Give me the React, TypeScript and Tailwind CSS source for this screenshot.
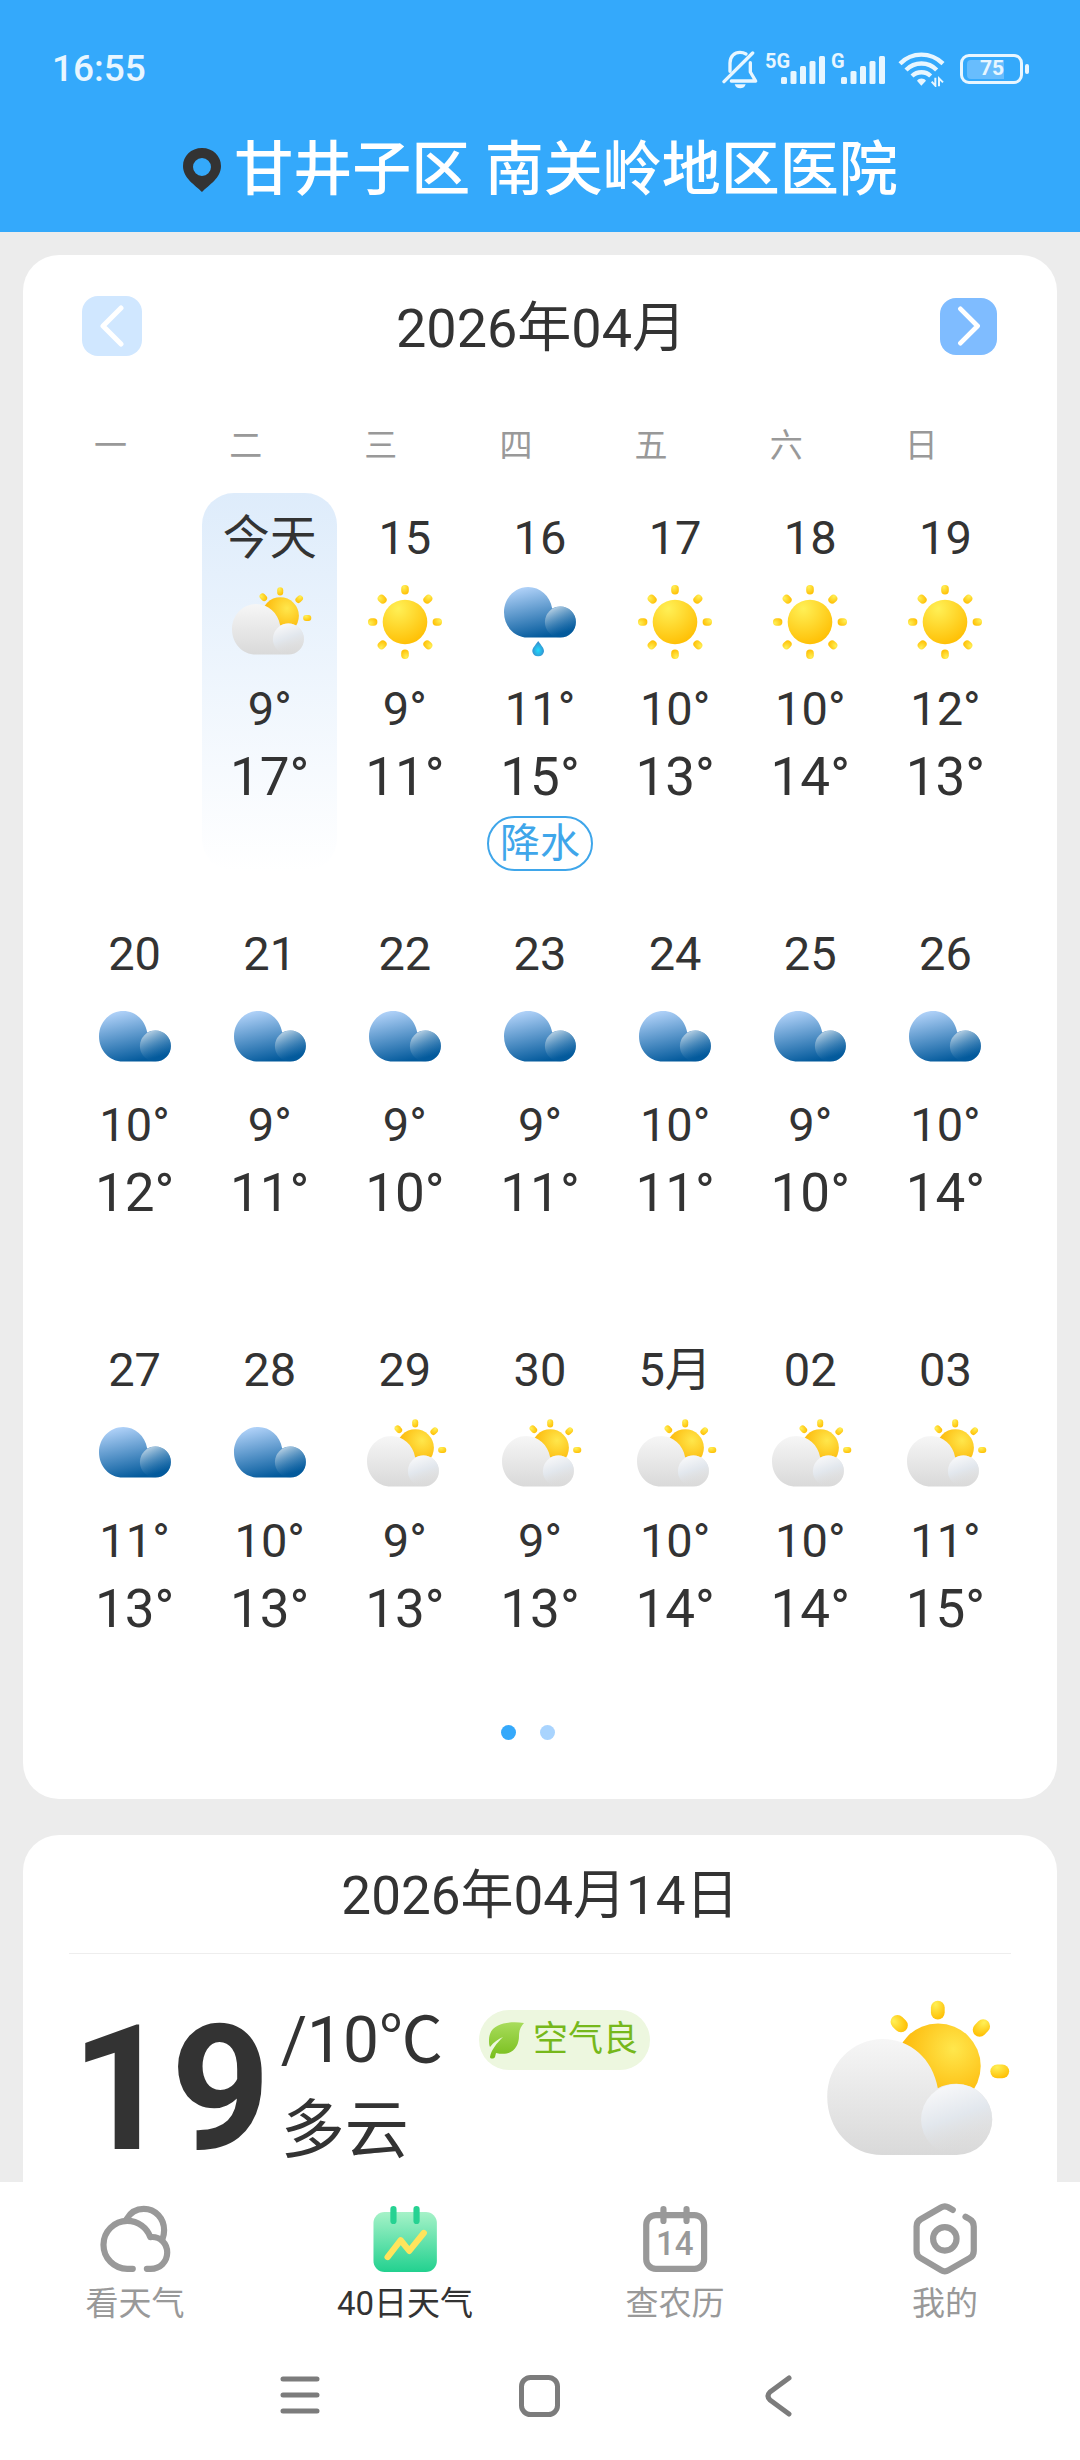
import { useState, type ReactNode } from 'react';

type Weather = 'sunny' | 'partly' | 'cloudy' | 'rain';

interface Day {
  label: string;
  weather: Weather;
  low: number;
  high: number;
  tag?: string;
  today?: boolean;
}

const WEEKDAYS = ['一', '二', '三', '四', '五', '六', '日'];

const WEEKS: (Day | null)[][] = [
  [
    null,
    { label: '今天', weather: 'partly', low: 9, high: 17, today: true },
    { label: '15', weather: 'sunny', low: 9, high: 11 },
    { label: '16', weather: 'rain', low: 11, high: 15, tag: '降水' },
    { label: '17', weather: 'sunny', low: 10, high: 13 },
    { label: '18', weather: 'sunny', low: 10, high: 14 },
    { label: '19', weather: 'sunny', low: 12, high: 13 },
  ],
  [
    { label: '20', weather: 'cloudy', low: 10, high: 12 },
    { label: '21', weather: 'cloudy', low: 9, high: 11 },
    { label: '22', weather: 'cloudy', low: 9, high: 10 },
    { label: '23', weather: 'cloudy', low: 9, high: 11 },
    { label: '24', weather: 'cloudy', low: 10, high: 11 },
    { label: '25', weather: 'cloudy', low: 9, high: 10 },
    { label: '26', weather: 'cloudy', low: 10, high: 14 },
  ],
  [
    { label: '27', weather: 'cloudy', low: 11, high: 13 },
    { label: '28', weather: 'cloudy', low: 10, high: 13 },
    { label: '29', weather: 'partly', low: 9, high: 13 },
    { label: '30', weather: 'partly', low: 9, high: 13 },
    { label: '5月', weather: 'partly', low: 10, high: 14 },
    { label: '02', weather: 'partly', low: 10, high: 14 },
    { label: '03', weather: 'partly', low: 11, high: 15 },
  ],
];

const CLOUD_PATH =
  'M24 50.6C10 50.6 0 39 0 25.3C0 11 11 0 24.2 0C36 0 46 8.5 48.2 21.5C50.5 20.2 53 19.5 56.4 19.5A15.55 15.55 0 0 1 56.4 50.6Z';

// Shared gradients, referenced by every weather icon
function IconDefs() {
  return (
    <svg className="absolute size-0" aria-hidden="true">
      <defs>
        <radialGradient id="sun" cx="0.35" cy="0.2" r="0.8">
          <stop offset="0" stopColor="#fff056" />
          <stop offset="1" stopColor="#ffc107" />
        </radialGradient>
        <radialGradient id="sunBehind" cx="0.68" cy="0.3" r="0.6">
          <stop offset="0" stopColor="#ffe74c" />
          <stop offset="1" stopColor="#fdba0c" />
        </radialGradient>
        <linearGradient id="cloud" x1="0" y1="0" x2="0" y2="1">
          <stop offset="0" stopColor="#f6f6f6" />
          <stop offset="1" stopColor="#d9d9d9" />
        </linearGradient>
        <linearGradient id="cloudPuff" x1="0.2" y1="0" x2="0.55" y2="1">
          <stop offset="0" stopColor="#fafafb" />
          <stop offset="0.5" stopColor="#e2e7ed" />
          <stop offset="0.9" stopColor="#dcdcdc" stopOpacity="0" />
        </linearGradient>
        <linearGradient id="darkCloud" x1="0.2" y1="0" x2="0.5" y2="1">
          <stop offset="0" stopColor="#b5d5fb" />
          <stop offset="1" stopColor="#035a9c" />
        </linearGradient>
        <linearGradient id="darkPuff" x1="0.2" y1="0.05" x2="0.6" y2="0.85">
          <stop offset="0" stopColor="#bcd4e6" />
          <stop offset="1" stopColor="#035a9c" stopOpacity="0.2" />
        </linearGradient>
        <radialGradient id="drop" cx="0.5" cy="0.6" r="0.5">
          <stop offset="0" stopColor="#1fdcff" />
          <stop offset="1" stopColor="#3591cf" />
        </radialGradient>
        <linearGradient id="leaf" x1="0" y1="0" x2="0" y2="1">
          <stop offset="0" stopColor="#a8dc5c" />
          <stop offset="1" stopColor="#78be1c" />
        </linearGradient>
        <linearGradient id="calendar" x1="0" y1="0" x2="0" y2="1">
          <stop offset="0" stopColor="#a6f2c8" />
          <stop offset="1" stopColor="#22d18f" />
        </linearGradient>
      </defs>
    </svg>
  );
}

function PartlyCloudy() {
  return (
    <>
      <circle cx="48.3" cy="11.8" r="18.6" fill="url(#sunBehind)" />
      <rect x="45.2" y="-16.7" width="6" height="8.2" rx="3" fill="url(#sun)" />
      <rect x="28.3" y="-10.8" width="6" height="8.2" rx="3" fill="url(#sun)" transform="rotate(-45 31.3 -6.8)" />
      <rect x="64.2" y="-8.9" width="6" height="8.2" rx="3" fill="url(#sun)" transform="rotate(45 67.2 -4.8)" />
      <rect x="71.1" y="11.1" width="8.2" height="6" rx="3" fill="url(#sun)" />
      <path d={CLOUD_PATH} fill="url(#cloud)" />
      <circle cx="56.4" cy="35.1" r="15.5" fill="url(#cloudPuff)" />
    </>
  );
}

function DarkCloud() {
  return (
    <>
      <path d={CLOUD_PATH} fill="url(#darkCloud)" />
      <circle cx="56.4" cy="35.1" r="15.5" fill="url(#darkPuff)" />
    </>
  );
}

function WeatherIcon({ weather }: { weather: Weather }) {
  return (
    <svg viewBox="0 0 84 78" className="h-[78px] w-[84px]" aria-hidden="true">
      {weather === 'sunny' && (
        <g transform="translate(42 39)">
          <circle r="22.3" fill="url(#sun)" />
          {[0, 45, 90, 135, 180, 225, 270, 315].map((a) => (
            <rect key={a} x="-3.8" y="-37" width="7.6" height="9.4" rx="3.7" fill="url(#sun)" transform={`rotate(${a})`} />
          ))}
        </g>
      )}
      {weather === 'partly' && (
        <g transform="translate(4 21)">
          <PartlyCloudy />
        </g>
      )}
      {weather === 'cloudy' && (
        <g transform="translate(6 12)">
          <DarkCloud />
        </g>
      )}
      {weather === 'rain' && (
        <g transform="translate(6 4)">
          <DarkCloud />
          <path d="M34.2 54C37 58 40 61 40 64.2A5.9 5.9 0 0 1 28.3 64.2C28.3 61 31.4 58 34.2 54Z" fill="url(#drop)" />
        </g>
      )}
    </svg>
  );
}

function Signal({ label, offset }: { label: string; offset: number }) {
  const heights = [7, 13, 18, 23, 28];
  return (
    <svg width={offset + 45} height="42" aria-hidden="true" className="fill-[#e8f6ff]">
      <text x="0" y="20" fontSize="20" fontWeight="700">{label}</text>
      {heights.map((h, i) => (
        <rect key={h} x={offset + i * 9.5} y={36 - h} width="6" height={h} rx="1.5" />
      ))}
    </svg>
  );
}

function StatusBar() {
  return (
    <div className="flex items-center justify-between pt-[46px] pr-[51px] pl-[52px] text-[#e8f6ff]">
      <span className="text-[37px] leading-[46px] font-medium">16:55</span>
      <div className="flex items-center">
        <svg viewBox="70 58 108 117" className="mr-[7px] h-[39px] w-9" fill="none" stroke="currentColor" strokeWidth="10" strokeLinecap="round" strokeLinejoin="round" aria-hidden="true">
          <path d="M94 122V97C94 77 108 65 124 65C131 65 137 67 142 70" />
          <path d="M76 153L162 67" />
          <path d="M155 96V124L171 151H98" />
          <path d="M108 161H141C138 170 132 173 124.500 173S111 170 108 161Z" fill="currentColor" stroke="none" />
        </svg>
        <Signal label="5G" offset={16} />
        <div className="w-[5px]" />
        <Signal label="G" offset={10} />
        <svg viewBox="595 62 141 108" className="ml-3 h-9 w-[47px]" fill="none" stroke="currentColor" strokeWidth="13" aria-hidden="true">
          <path d="M601 100C637 64 693 64 730 100" />
          <path d="M619 119C645 93 686 93 711 119" />
          <path d="M637 137C653 122 678 122 693 137" />
          <path d="M652 151C658 142 673 142 679 151L665 166Z" fill="currentColor" stroke="none" />
          <path d="M707 142V166L696 154M718 168V144L730 156" strokeWidth="6" />
        </svg>
        <div className="ml-[15px] flex h-[30px] w-[63px] items-center rounded-[9px] border-[3px] border-current p-1">
          <span className="flex h-[19px] w-[37px] items-center justify-end rounded-l-[4px] bg-[#68bdfd] text-[21px] font-bold">75</span>
        </div>
        <span className="ml-0.5 h-2.5 w-1 rounded-full bg-current" />
      </div>
    </div>
  );
}

function DayCell({ day }: { day: Day }) {
  return (
    <div
      className={`flex h-[378px] flex-col items-center ${
        day.today ? 'rounded-[32px] bg-linear-to-b from-[#deecfb] to-white' : ''
      }`}
    >
      <span className="text-[47px] leading-[90px]">{day.label}</span>
      <WeatherIcon weather={day.weather} />
      <span className="mt-[18px] text-[47px] leading-[60px]">{day.low}°</span>
      <span className="text-[53px] leading-[76px]">{day.high}°</span>
      {day.tag && (
        <span className="mt-px rounded-full border-2 border-[#3fa6ea] px-[11px] text-[40px] leading-[51px] text-[#3fa6ea]">
          {day.tag}
        </span>
      )}
    </div>
  );
}

function CalendarCard() {
  return (
    <section className="rounded-[36px] bg-white px-11 pb-[59px]">
      <div className="flex h-[148px] items-center justify-between pr-4 pl-[15px]">
        <button type="button" aria-label="上个月" className="mb-1.5 flex size-[60px] items-center justify-center rounded-2xl bg-[#d0e7ff]">
          <svg viewBox="0 0 24 42" className="h-[42px] w-6" fill="none" stroke="#fff" strokeWidth="5" strokeLinecap="round" strokeLinejoin="round">
            <path d="M21 3L3 21L21 39" />
          </svg>
        </button>
        <h2 className="text-[54px] leading-[60px]">2026年04月</h2>
        <button type="button" aria-label="下个月" className="mb-1.5 flex size-[57px] items-center justify-center rounded-2xl bg-[#7fbcff]">
          <svg viewBox="0 0 24 42" className="h-10 w-6" fill="none" stroke="#fff" strokeWidth="5" strokeLinecap="round" strokeLinejoin="round">
            <path d="M3 3L21 21L3 39" />
          </svg>
        </button>
      </div>
      <table className="w-full table-fixed border-collapse">
        <thead>
          <tr>
            {WEEKDAYS.map((d) => (
              <th key={d} scope="col" className="h-[90px] pt-0 pr-0 pb-1 pl-[27px] text-left text-[33px] font-normal text-[#999]">
                {d}
              </th>
            ))}
          </tr>
        </thead>
        <tbody>
          {WEEKS.map((week, i) => (
            <tr key={i}>
              {week.map((day, j) => (
                <td key={j} className="p-0 pb-[38px]">
                  {day && <DayCell day={day} />}
                </td>
              ))}
            </tr>
          ))}
        </tbody>
      </table>
      <div className="-mt-4 mr-6 flex justify-center gap-6">
        <span className="size-[15px] rounded-full bg-[#35a9fb]" />
        <span className="size-[15px] rounded-full bg-[#a9d4fe]" />
      </div>
    </section>
  );
}

function DayDetailCard() {
  return (
    <section className="h-[420px] shrink-0 rounded-[36px] bg-white px-[46px]">
      <h2 className="border-b border-[#eee] pt-1 text-center text-[53px] leading-[114px]">2026年04月14日</h2>
      <div className="flex items-start pt-11">
        <span className="pl-0.5 text-[174px] leading-[184px] font-bold">19</span>
        <div className="ml-2.5 flex flex-col">
          <span className="text-[64px] leading-[86px]">/10℃</span>
          <span className="text-[64px] leading-[94px]">多云</span>
        </div>
        <span className="mt-3 ml-9 flex h-[60px] items-center rounded-full bg-[#edf7df] pr-3 pl-2 text-[35px] text-[#76b81b]">
          <svg viewBox="0 0 38 40" className="mr-2 h-10 w-[38px]" aria-hidden="true">
            <path d="M37 3C22 1 2 3 2 20C2 23 2 25 3 27C7 22 11 19 16 17C10 23 4 30 3 37C3 39 7 39 8 37L9 33C26 37 32 26 32 16C32 10 34 6 37 3Z" fill="url(#leaf)" />
          </svg>
          空气良
        </span>
        <svg viewBox="0 -17 80 68" className="mt-0.5 ml-auto h-[156px] w-[184px]" aria-hidden="true">
          <PartlyCloudy />
        </svg>
      </div>
    </section>
  );
}

function CalendarOutline() {
  return (
    <>
      <rect x="310" y="136" width="168" height="156" rx="28" />
      <path d="M360 119V153M427 119V153" />
      <text x="393" y="252" textAnchor="middle" fontSize="96" fontWeight="500" fill="currentColor" stroke="none">
        14
      </text>
    </>
  );
}

const TABS: { name: string; viewBox: string; icon: ReactNode }[] = [
  {
    name: '看天气',
    viewBox: '288 101 209 209',
    icon: (
      <>
        <path d="M386 292H370C332 292 301 261 301 222C301 184 332 153 370 153C402 153 427 173 437 200C465 197 486 218 486 245C486 272 465 292 438 292H427" />
        <path d="M368 148C378 130 396 118 418 118C452 118 477 146 477 180C477 190 475 199 472 207" />
      </>
    ),
  },
  {
    name: '40日天气',
    viewBox: '1073 101 209 209',
    icon: (
      <>
        <rect x="1086" y="127" width="184" height="174" rx="32" fill="url(#calendar)" stroke="none" />
        <path d="M1144 119V153M1211 119V153" stroke="#26d292" />
        <path d="M1127 258L1165 209L1190 240L1232 188" stroke="#ffe45c" />
      </>
    ),
  },
  { name: '查农历', viewBox: '289 101 209 209', icon: <CalendarOutline /> },
  {
    name: '我的',
    viewBox: '1073 101 209 209',
    icon: (
      <>
        <path d="M1200 121L1188 114Q1177 107 1166 114L1107 148Q1095 155 1095 169V240Q1095 254 1107 261L1166 296Q1177 303 1188 296L1249 261Q1261 254 1261 240V169Q1261 155 1249 148L1237 141" />
        <circle cx="1177" cy="205" r="34" />
      </>
    ),
  },
];

function TabBar() {
  const [active, setActive] = useState(1);
  return (
    <nav className="grid grid-cols-4 bg-white pt-[21px] pb-3">
      {TABS.map((tab, i) => (
        <button
          key={tab.name}
          type="button"
          onClick={() => setActive(i)}
          className={`flex flex-col items-center gap-1 text-[33px] leading-[50px] ${i === active ? 'text-[#333]' : 'text-[#999]'}`}
        >
          <svg viewBox={tab.viewBox} className="size-[72px]" fill="none" stroke="currentColor" strokeWidth="18" strokeLinecap="round" strokeLinejoin="round" aria-hidden="true">
            {tab.icon}
          </svg>
          {tab.name}
        </button>
      ))}
    </nav>
  );
}

function SystemBar() {
  return (
    <div className="grid h-[119px] grid-cols-3 items-center justify-items-center bg-white px-[180px] pb-2 text-[#7c7c7c]">
      <button type="button" aria-label="最近任务">
        <svg viewBox="0 0 44 44" className="size-11" stroke="currentColor" strokeWidth="5" strokeLinecap="round">
          <path d="M5 4H39M5 20H39M5 36H39" />
        </svg>
      </button>
      <button type="button" aria-label="主屏幕">
        <svg viewBox="0 0 44 44" className="size-11" fill="none" stroke="currentColor" strokeWidth="5">
          <rect x="3.500" y="2.500" width="36" height="37" rx="9" />
        </svg>
      </button>
      <button type="button" aria-label="返回">
        <svg viewBox="0 0 44 44" className="size-11" fill="none" stroke="currentColor" strokeWidth="5" strokeLinecap="round" strokeLinejoin="round">
          <path d="M31 3L12 17Q8 21 12 25L31 39" />
        </svg>
      </button>
    </div>
  );
}

export default function App() {
  return (
    <div className="flex h-screen flex-col bg-[#ececec] font-[Roboto,'Noto_Sans_CJK_SC',sans-serif] text-[#333]">
      <IconDefs />
      <header className="bg-[#34a9fb] pb-[19px]">
        <StatusBar />
        <h1 className="mt-[35px] flex items-center justify-center text-[59px] leading-[86px] font-medium text-white">
          <svg viewBox="0 0 40 46" className="mr-3 h-[46px] w-10" aria-hidden="true">
            <path
              fillRule="evenodd"
              d="M20 1C9 1 1 9 1 19C1 31 13 38 20 45C27 38 39 31 39 19C39 9 31 1 20 1ZM20 11A9 9 0 1 1 20 29A9 9 0 1 1 20 11Z"
              fill="#333"
            />
          </svg>
          甘井子区 南关岭地区医院
        </h1>
      </header>
      <main className="flex min-h-0 flex-1 flex-col gap-9 overflow-hidden px-[23px] pt-[23px]">
        <CalendarCard />
        <DayDetailCard />
      </main>
      <TabBar />
      <SystemBar />
    </div>
  );
}
